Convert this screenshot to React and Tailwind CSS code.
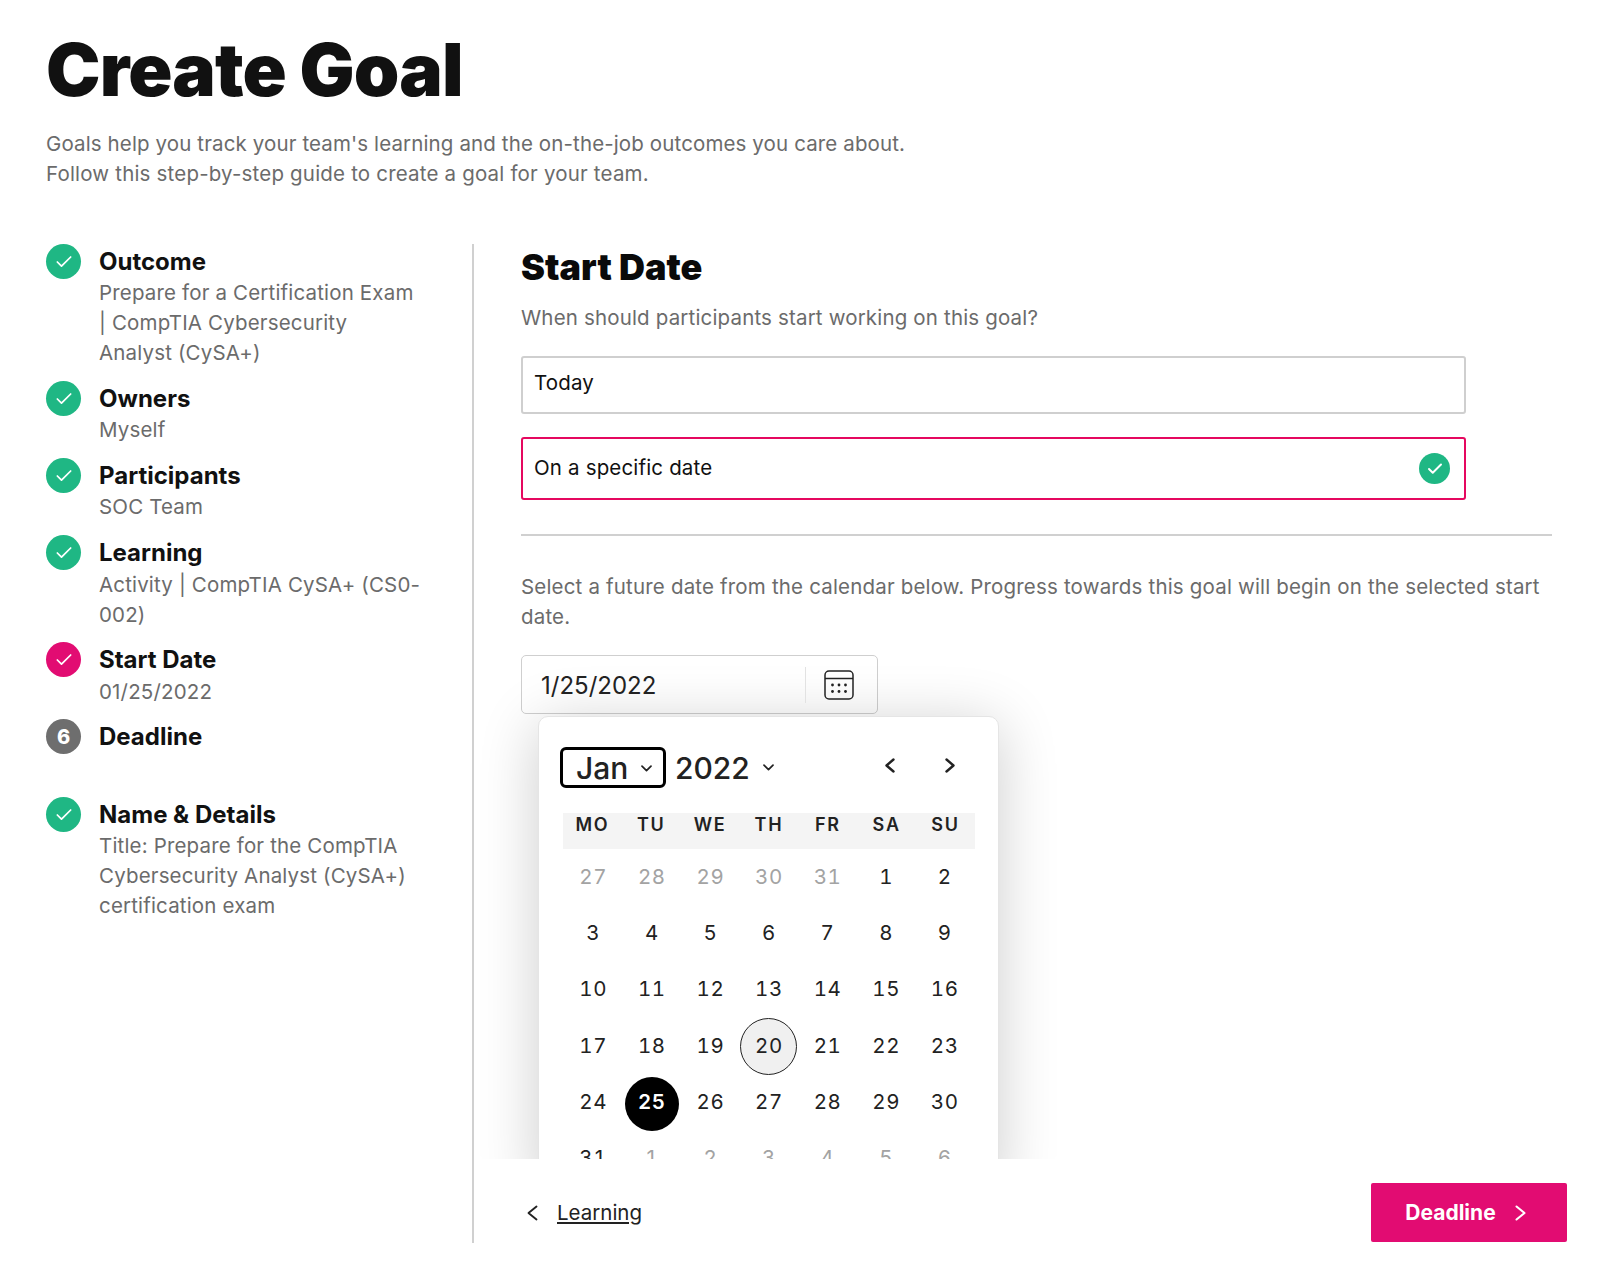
import { Check } from "lucide-react";

const steps = [
  { title: "Outcome", sub: "Prepare for a Certification Exam | CompTIA Cybersecurity Analyst (CySA+)", color: "bg-[#1fb784]" },
  { title: "Owners", sub: "Myself", color: "bg-[#1fb784]" },
  { title: "Participants", sub: "SOC Team", color: "bg-[#1fb784]" },
  { title: "Learning", sub: "Activity | CompTIA CySA+ (CS0-002)", color: "bg-[#1fb784]", nudge: true },
  { title: "Start Date", sub: "01/25/2022", color: "bg-[#e20c72]", nudge: true },
  { title: "Deadline", num: 6, color: "bg-[#6e6e6e]", wide: true },
  { title: "Name & Details", sub: "Title: Prepare for the CompTIA Cybersecurity Analyst (CySA+) certification exam", color: "bg-[#1fb784]" },
];

const weekdays = ["MO", "TU", "WE", "TH", "FR", "SA", "SU"];

const days = [
  ["27", 1], ["28", 1], ["29", 1], ["30", 1], ["31", 1], ["1"], ["2"],
  ["3"], ["4"], ["5"], ["6"], ["7"], ["8"], ["9"],
  ["10"], ["11"], ["12"], ["13"], ["14"], ["15"], ["16"],
  ["17"], ["18"], ["19"], ["20"], ["21"], ["22"], ["23"],
  ["24"], ["25"], ["26"], ["27"], ["28"], ["29"], ["30"],
  ["31"], ["1", 1], ["2", 1], ["3", 1], ["4", 1], ["5", 1], ["6", 1],
];

const ChevLeft = ({ w = 10, h = 15, sw = 2.4, className = "" }) => (
  <svg width={w} height={h} viewBox={`0 0 ${w} ${h}`} fill="none" stroke="currentColor" strokeWidth={sw} strokeLinecap="round" strokeLinejoin="round" className={className}>
    <path d={`M${w - 1.5} 1.5L1.5 ${h / 2}L${w - 1.5} ${h - 1.5}`} />
  </svg>
);

const ChevRight = ({ w = 10, h = 15, sw = 2.4, className = "" }) => (
  <svg width={w} height={h} viewBox={`0 0 ${w} ${h}`} fill="none" stroke="currentColor" strokeWidth={sw} strokeLinecap="round" strokeLinejoin="round" className={className}>
    <path d={`M1.5 1.5L${w - 1.5} ${h / 2}L1.5 ${h - 1.5}`} />
  </svg>
);

const ChevDown = ({ className = "" }) => (
  <svg width="11" height="7" viewBox="0 0 11 7" fill="none" stroke="currentColor" strokeWidth="1.7" strokeLinecap="round" strokeLinejoin="round" className={className}>
    <path d="M1 1.2L5.5 5.6L10 1.2" />
  </svg>
);

const Step = ({ step }) => (
  <div className={`flex gap-[18px] ${step.wide ? "mb-[14px]" : step.nudge ? "mb-[12px]" : "mb-[13px]"}`}>
    <div className={`w-[35px] h-[35px] rounded-full shrink-0 flex items-center justify-center text-white ${step.color}`}>
      {step.num ? (
        <span className="text-[20px] font-extrabold">{step.num}</span>
      ) : (
        <Check size={20} strokeWidth={2.1} />
      )}
    </div>
    <div className="w-[322px]">
      <div className={`leading-[36px] text-[24px] font-bold text-[#111] ${step.nudge ? "h-[35px]" : "h-[34px]"}`}>{step.title}</div>
      <div className="min-h-[30px] leading-[30px] text-[20.5px] text-[#6b6b6b] tracking-[0.008em]">{step.sub}</div>
    </div>
  </div>
);

const Day = ({ label, muted }) => {
  const selected = label === "25" && !muted;
  const today = label === "20";
  return (
    <div className={`h-[56.3px] flex items-center justify-center text-[20.5px] tabular-nums tracking-[0.03em] ${muted ? "text-[#a3a3a3]" : "text-[#222]"}`}>
      {selected ? (
        <span className="w-[54px] h-[54px] mt-[4px] pb-[3px] rounded-full bg-black text-white font-semibold flex items-center justify-center">{label}</span>
      ) : today ? (
        <span className="w-[57px] h-[57px] rounded-full bg-[#f0f0f0] border border-[#222] flex items-center justify-center">{label}</span>
      ) : (
        label
      )}
    </div>
  );
};

const CalendarIcon = () => (
  <svg width="30" height="30" viewBox="0 0 30 30" fill="none" stroke="#222" strokeWidth="1.5">
    <rect x="1" y="1" width="28" height="28" rx="4" />
    <path d="M1 8.5h28" />
    <g fill="#222" stroke="none">
      <circle cx="8.5" cy="15" r="1.4" />
      <circle cx="15" cy="15" r="1.4" />
      <circle cx="21.5" cy="15" r="1.4" />
      <circle cx="8.5" cy="21.5" r="1.4" />
      <circle cx="15" cy="21.5" r="1.4" />
      <circle cx="21.5" cy="21.5" r="1.4" />
    </g>
  </svg>
);

export default function App() {
  return (
    <div className="w-[1600px] h-[1270px] bg-white font-[Inter,sans-serif] overflow-hidden">
      <div className="pl-[46px] pt-[24px]">
        <h1 className="text-[73px] leading-[92px] font-black text-[#111] tracking-[-0.012em]">Create Goal</h1>
        <p className="mt-[13px] text-[20.5px] leading-[30px] text-[#6b6b6b] tracking-[0.006em]">
          Goals help you track your team's learning and the on-the-job outcomes you care about.
          <br />
          <span className="tracking-[0.009em]">Follow this step-by-step guide to create a goal for your team.</span>
        </p>
      </div>

      <div className="flex mt-[55px] pl-[46px] h-[999px]">
        <aside className="w-[426px] shrink-0">
          {steps.map((s) => (
            <Step key={s.title} step={s} />
          ))}
        </aside>

        <main className="flex-1 min-w-0 flex flex-col border-l-2 border-[#d0d0d0]">
          <div className="h-[915px] overflow-hidden pl-[47px] pr-[48px]">
            <h2 className="h-[47px] leading-[47px] text-[36px] font-black text-[#0a0a0a]">Start Date</h2>
            <p className="mt-[12px] leading-[30px] text-[20.5px] text-[#6b6b6b] tracking-[0.008em]">When should participants start working on this goal?</p>

            <div className="mt-[23px] w-[945px] h-[58px] pl-[11px] pb-[3px] flex items-center border-2 border-[#cfcfcf] rounded-[3px] text-[20.5px] text-[#111] tracking-[0.008em]">Today</div>
            <div className="mt-[23px] w-[945px] h-[63px] pl-[11px] pr-[14px] flex items-center justify-between border-2 border-[#e5085f] rounded-[3px] text-[20.5px] text-[#111] tracking-[0.008em]">
              On a specific date
              <span className="w-[31px] h-[31px] rounded-full bg-[#1fb784] text-white flex items-center justify-center">
                <Check size={18} strokeWidth={2.6} />
              </span>
            </div>

            <div className="mt-[34px] h-[2px] bg-[#d0d0d0]" />

            <p className="mt-[36px] leading-[30px] text-[20.5px] text-[#6b6b6b] tracking-[0.0085em]">
              Select a future date from the calendar below. Progress towards this goal will begin on the selected start date.
            </p>

            <div className="mt-[23px] w-[357px] h-[59px] flex items-center border border-[#cfcfcf] rounded-[5px] pl-[19px] pr-[23px]">
              <span className="flex-1 pt-[2px] text-[24px] text-[#222]">1/25/2022</span>
              <span className="w-px h-[36px] bg-[#e2e2e2] mr-[18px]" />
              <CalendarIcon />
            </div>

            <div className="mt-[2px] ml-[17px] w-[461px] bg-white border border-[#e5e5e5] rounded-[10px] pl-[24px] pr-[23px] pt-[30px] shadow-[0_8px_60px_rgba(0,0,0,0.2)]">
              <div className="flex items-center h-[41px] -ml-[3px] text-[#222]">
                <div className="w-[106px] h-[41px] border-[3px] border-black rounded-[6px] flex items-center pl-[13px] pt-[1px] text-[30px] font-medium">
                  Jan
                  <ChevDown className="ml-[13px]" />
                </div>
                <span className="ml-[9px] pt-[1px] text-[30px] font-medium">2022</span>
                <ChevDown className="ml-[13px]" />
                <ChevLeft className="ml-[111px] -mt-[5px]" />
                <ChevRight className="ml-[50px] -mt-[5px]" />
              </div>

              <div className="mt-[25px] grid grid-cols-7 h-[36px] bg-[#f4f4f4]">
                {weekdays.map((d) => (
                  <div key={d} className="text-center text-[18px] leading-[24px] font-semibold tracking-[0.1em] text-[#222]">{d}</div>
                ))}
              </div>

              <div className="grid grid-cols-7 mx-[1px]">
                {days.map(([label, muted], i) => (
                  <Day key={i} label={label} muted={muted} />
                ))}
              </div>
            </div>
          </div>

          <div className="flex-1 flex items-start justify-between pl-[47px] pr-[33px] pt-[24px]">
            <div className="flex items-center mt-[18px] text-[#222]">
              <ChevLeft w={11} h={16} sw={1.9} className="ml-[6px]" />
              <a className="ml-[19px] underline text-[20.5px] leading-[24px]">Learning</a>
            </div>
            <button className="w-[196px] h-[59px] bg-[#e20c72] rounded-[2px] text-white text-[21px] font-bold flex items-center justify-center gap-[19px] pr-[7px]">
              Deadline
              <ChevRight w={11} h={16} sw={2.1} />
            </button>
          </div>
        </main>
      </div>
    </div>
  );
}
